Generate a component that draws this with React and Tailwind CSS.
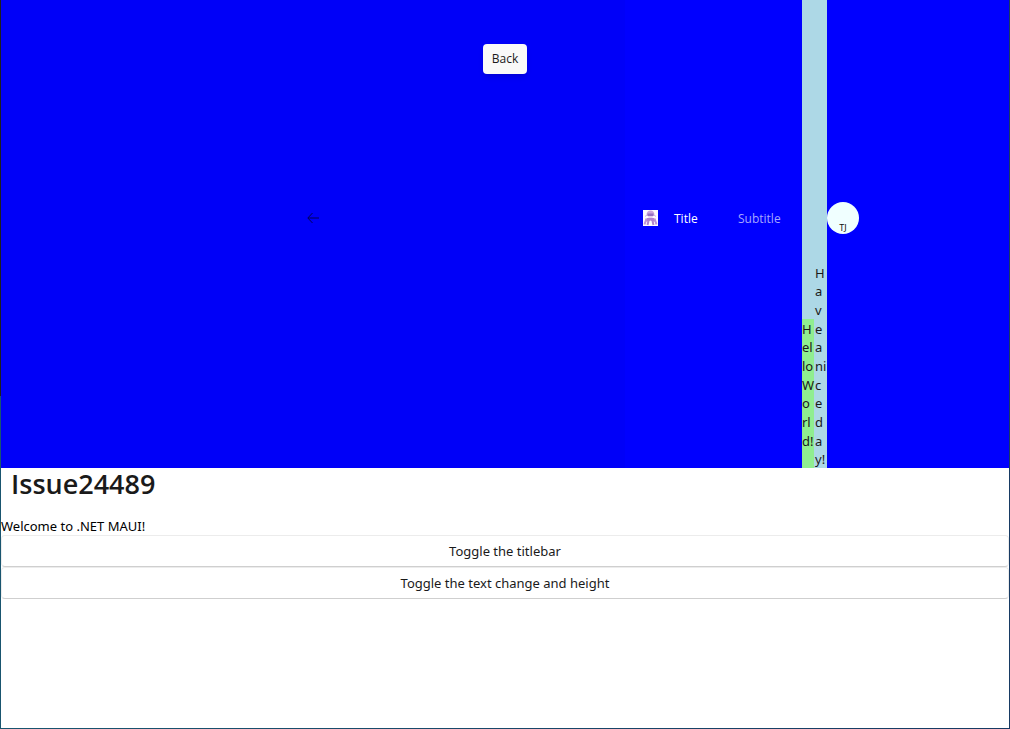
import React from "react";

const hello = ["H", "el", "lo", "W", "o", "rl", "d!", ""];
const nice = ["H", "a", "v", "e", "a", "ni", "c", "e", "d", "a", "y!"];

function Stack({ lines, className }) {
  return (
    <div className={"flex flex-col whitespace-nowrap text-[13px] text-[#1a1a1a] " + className}>
      {lines.map((line, i) => (
        <span key={i} className="flex min-h-0 flex-1 items-center pt-0.5 leading-none">
          {line}
        </span>
      ))}
    </div>
  );
}

function AppIcon() {
  return (
    <svg viewBox="0 0 15 16" className="h-4 w-[15px] shrink-0" aria-hidden="true">
      <rect width="15" height="16" fill="#fdfaff" />
      <path d="M3.500 5.500C3.500 2.300 5 .5 7.500 .5S11.500 2.300 11.500 5.500z" fill="#c9a2dc" />
      <path d="M4.500 3.500h6v2.500h-6z" fill="#9670c0" />
      <path d="M5 6.200h5l-.6 1.600H5.600z" fill="#dcc0ea" />
      <path d="M3.500 5l-1 1.500M11.500 5l1 1.500" stroke="#c9a2dc" />
      <path d="M4 8h7l1.500 3.500H9.500L7.500 10.500 5.500 11.500h-3z" fill="#b083cf" />
      <path d="M3.500 8.500L1.500 14.500M11.500 8.500l2 6" fill="none" stroke="#bd93d8" strokeWidth="2" />
      <path d="M5.500 11L4.500 15M9.500 11l1 4" fill="none" stroke="#b083cf" strokeWidth="2" />
    </svg>
  );
}

function TitleBar() {
  return (
    <header className="relative flex h-[468px] bg-[#0000ff]">
      <div className="flex flex-1 items-center justify-center bg-[#0000f8] pb-8">
        <button type="button" aria-label="Back" className="flex h-8 w-11 items-center justify-center text-[#000058]">
          <svg viewBox="0 0 12 12" className="size-3" fill="none" stroke="currentColor">
            <path d="M12 6H1M5.500 1L.8 6l4.700 5" />
          </svg>
        </button>
      </div>
      <div className="flex w-[384px] shrink-0">
        <div className="flex w-[177px] items-center pb-8 pl-[18px] font-['Open_Sans','Noto_Sans',sans-serif] text-xs">
          <AppIcon />
          <span className="ml-4 w-16 pt-px text-white">Title</span>
          <span className="pt-px text-[#a6a6ff]">Subtitle</span>
        </div>
        <div className="flex w-[25px] items-end bg-[#add8e6]">
          <Stack lines={hello} className="h-[149px] w-3 bg-[#90ee90]" />
          <Stack lines={nice} className="h-[205px] w-[13px] pl-px" />
        </div>
        <div className="flex items-center pb-8">
          <div className="flex size-8 items-end justify-center rounded-full bg-[#f0ffff] pb-px text-[9px] leading-[10px] text-[#111111]">
            TJ
          </div>
        </div>
      </div>
      <div
        role="tooltip"
        className="absolute inset-x-0 top-11 mx-auto flex h-[30px] w-11 items-center justify-center rounded bg-[#f9f9f9] font-['Open_Sans','Noto_Sans',sans-serif] text-xs text-[#1a1a1a] shadow-md"
      >
        Back
      </div>
    </header>
  );
}

function ActionButton({ children }) {
  return (
    <button
      type="button"
      className="h-8 w-full rounded border border-[#ececec] border-b-[#cfcfcf] bg-white pt-0.5 text-[13px] text-[#1a1a1a]"
    >
      {children}
    </button>
  );
}

export default function App() {
  return (
    <div className="flex min-h-screen bg-gradient-to-r from-[#19556f] to-[#173a63] font-['Noto_Sans','Open_Sans',sans-serif]">
      <div className="w-px shrink-0">
        <div className="h-[396px] bg-[#1f1f1f]" />
      </div>
      <div className="mr-px mb-px flex flex-1 flex-col bg-white">
        <TitleBar />
        <main>
          <h1 className="px-[10px] font-['Open_Sans','Noto_Sans',sans-serif] text-[27px] leading-8 font-semibold text-[#1a1a1a]">Issue24489</h1>
          <p className="mt-4 pt-px text-[13px] leading-[18px] text-black">Welcome to .NET MAUI!</p>
          <div className="flex flex-col">
            <ActionButton>Toggle the titlebar</ActionButton>
            <ActionButton>Toggle the text change and height</ActionButton>
          </div>
        </main>
      </div>
    </div>
  );
}
